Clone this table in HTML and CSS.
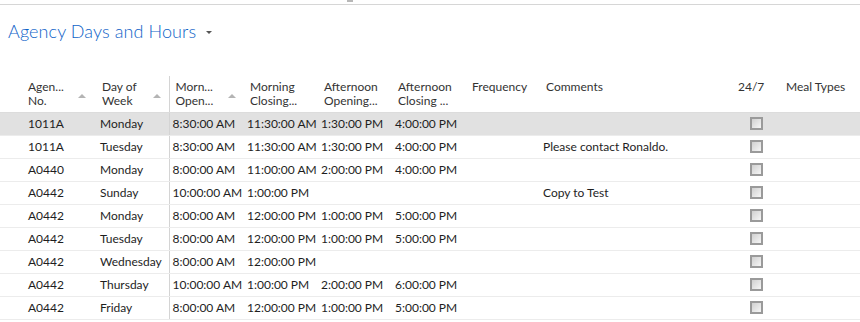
FILE: index.html
```html
<!DOCTYPE html>
<html>
<head>
<meta charset="utf-8">
<link rel="stylesheet" href="styles.css">
</head>
<body>
<div class="topbar"><span class="grip"></span></div>
<div class="title-row">
  <h1 class="title">Agency Days and Hours</h1>
  <span class="caret"></span>
</div>
<table class="grid">
  <colgroup>
    <col class="w1"><col class="w2"><col class="w3"><col class="w4"><col class="w5">
    <col class="w6"><col class="w7"><col class="w8"><col class="w9"><col class="w10">
  </colgroup>
  <thead>
    <tr>
      <th class="c1"><div class="hd"><span>Agen...<br>No.</span><i class="sort"></i></div></th>
      <th class="c2"><div class="hd"><span>Day of<br>Week</span><i class="sort"></i></div></th>
      <th class="c3 vline"><div class="hd"><span>Morn...<br>Open...</span><i class="sort"></i></div></th>
      <th><div class="hd"><span>Morning<br>Closing...</span></div></th>
      <th><div class="hd"><span>Afternoon<br>Opening...</span></div></th>
      <th><div class="hd"><span>Afternoon<br>Closing ...</span></div></th>
      <th><div class="hd"><span>Frequency</span></div></th>
      <th><div class="hd"><span>Comments</span></div></th>
      <th class="c9"><div class="hd"><span>24/7</span></div></th>
      <th class="c10"><div class="hd"><span>Meal Types</span></div></th>
    </tr>
  </thead>
  <tbody>
    <tr class="sel"><td class="c1">1011A</td><td class="c2">Monday</td><td class="vline">8:30:00 AM</td><td>11:30:00 AM</td><td>1:30:00 PM</td><td>4:00:00 PM</td><td></td><td></td><td class="c9"><span class="cb"></span></td><td></td></tr>
    <tr><td class="c1">1011A</td><td class="c2">Tuesday</td><td class="vline">8:30:00 AM</td><td>11:30:00 AM</td><td>1:30:00 PM</td><td>4:00:00 PM</td><td></td><td>Please contact Ronaldo.</td><td class="c9"><span class="cb"></span></td><td></td></tr>
    <tr><td class="c1">A0440</td><td class="c2">Monday</td><td class="vline">8:00:00 AM</td><td>11:00:00 AM</td><td>2:00:00 PM</td><td>4:00:00 PM</td><td></td><td></td><td class="c9"><span class="cb"></span></td><td></td></tr>
    <tr><td class="c1">A0442</td><td class="c2">Sunday</td><td class="vline">10:00:00 AM</td><td>1:00:00 PM</td><td></td><td></td><td></td><td>Copy to Test</td><td class="c9"><span class="cb"></span></td><td></td></tr>
    <tr><td class="c1">A0442</td><td class="c2">Monday</td><td class="vline">8:00:00 AM</td><td>12:00:00 PM</td><td>1:00:00 PM</td><td>5:00:00 PM</td><td></td><td></td><td class="c9"><span class="cb"></span></td><td></td></tr>
    <tr><td class="c1">A0442</td><td class="c2">Tuesday</td><td class="vline">8:00:00 AM</td><td>12:00:00 PM</td><td>1:00:00 PM</td><td>5:00:00 PM</td><td></td><td></td><td class="c9"><span class="cb"></span></td><td></td></tr>
    <tr><td class="c1">A0442</td><td class="c2">Wednesday</td><td class="vline">8:00:00 AM</td><td>12:00:00 PM</td><td></td><td></td><td></td><td></td><td class="c9"><span class="cb"></span></td><td></td></tr>
    <tr><td class="c1">A0442</td><td class="c2">Thursday</td><td class="vline">10:00:00 AM</td><td>1:00:00 PM</td><td>2:00:00 PM</td><td>6:00:00 PM</td><td></td><td></td><td class="c9"><span class="cb"></span></td><td></td></tr>
    <tr><td class="c1">A0442</td><td class="c2">Friday</td><td class="vline">8:00:00 AM</td><td>12:00:00 PM</td><td>1:00:00 PM</td><td>5:00:00 PM</td><td></td><td></td><td class="c9"><span class="cb"></span></td><td></td></tr>
  </tbody>
</table>
</body>
</html>
```

FILE: styles.css
```css
html, body {
  margin: 0;
  padding: 0;
  background: #fff;
}
body {
  font-family: "Lato", "Liberation Sans", sans-serif;
  font-size: 12px;
  color: #1e1e1e;
  overflow: hidden;
}
.topbar {
  height: 4px;
  border-bottom: 1px solid #d6d6d6;
  display: flex;
}
.grip {
  width: 6px;
  height: 2px;
  margin-left: 347px;
  background: #b8b8b8;
}
.title-row {
  display: flex;
  align-items: flex-start;
  height: 52px;
  padding-left: 8px;
  margin-bottom: 19px;
}
.title {
  margin: 15px 0 0 0;
  font-size: 18px;
  font-weight: 300;
  line-height: 22px;
  color: #0f63c8;
  letter-spacing: 0.1px;
}
.caret {
  width: 0;
  height: 0;
  margin: 26px 0 0 10px;
  border-left: 3px solid transparent;
  border-right: 3px solid transparent;
  border-top: 3px solid #555;
}

.grid {
  border-collapse: collapse;
  table-layout: fixed;
  width: 860px;
}
.w1 { width: 94px; }
.w2 { width: 75px; }
.w3 { width: 75px; }
.w4 { width: 74px; }
.w5 { width: 74px; }
.w6 { width: 74px; }
.w7 { width: 74px; }
.w8 { width: 190px; }
.w9 { width: 48px; }
.w10 { width: 82px; }

th {
  font-weight: normal;
  text-align: left;
  vertical-align: top;
  color: #333;
  padding: 4px 0 4px 6px;
  line-height: 14px;
  height: 28px;
  border-bottom: 1px solid #dcdcdc;
  white-space: nowrap;
}
.hd {
  display: flex;
  align-items: center;
  justify-content: space-between;
}
.hd span { display: block; }
.sort {
  width: 0;
  height: 0;
  border-left: 4px solid transparent;
  border-right: 4px solid transparent;
  border-bottom: 4px solid #b4b4b4;
  margin: 4px 8px 0 0;
}
th.c1 { padding-left: 28px; }
th.c2 { padding-left: 8px; }
th.c9 { padding-left: 8px; }
th.c10 { padding-left: 8px; }

td {
  height: 22px;
  padding: 0 0 0 3px;
  border-bottom: 1px solid #ececec;
  white-space: nowrap;
  overflow: hidden;
  line-height: 22px;
}
td.c1 { padding-left: 28px; }
td.c2 { padding-left: 6px; }
td.c9 { padding-left: 20px; }
.vline { border-left: 1px solid #d4d4d4; }
tr.sel td { background: #e1e1e1; }

.cb {
  display: inline-block;
  vertical-align: middle;
  width: 9px;
  height: 9px;
  border: 2px solid #9a9a9a;
  background: linear-gradient(135deg, #d0d0d0 0%, #f6f6f6 100%);
  margin-top: -2px;
}
```
